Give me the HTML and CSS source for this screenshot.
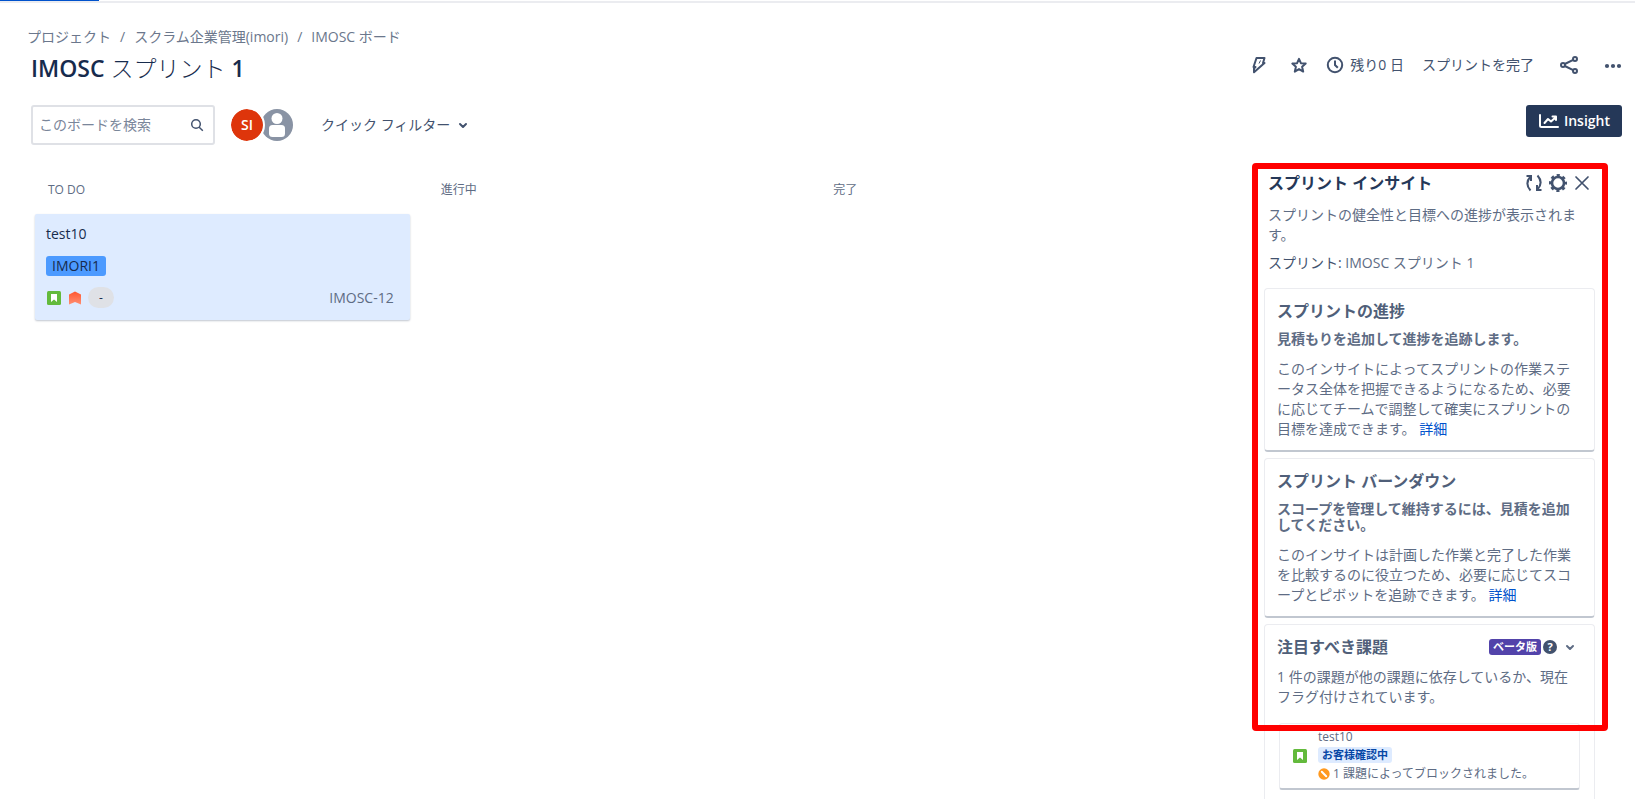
FILE: index.html
```html
<!DOCTYPE html>
<html lang="ja">
<head>
    <meta charset="UTF-8">
    <meta name="viewport" content="width=device-width, initial-scale=1.0">
    <title>IMOSC ボード</title>
    <link rel="stylesheet" href="styles.css">
</head>
<body>
    <div class="top-line"><div class="top-progress"></div></div>

    <!-- Header -->
    <header class="header">
        <div class="header-left">
            <nav class="breadcrumbs">
                <a href="#">プロジェクト</a>
                <span>/</span>
                <a href="#">スクラム企業管理(imori)</a>
                <span>/</span>
                <a href="#">IMOSC ボード</a>
            </nav>
            <h1><b>IMOSC</b> スプリント <b>1</b></h1>
        </div>
        <div class="header-actions">
            <button class="icon-btn" aria-label="自動化">
                <svg width="16" height="18" viewBox="0 0 16 18" fill="none" stroke="currentColor" stroke-width="2" stroke-linejoin="round"><path d="M5.500 2h8l-1.500 5h1.500L3 16.300V12.500l1.500-1.500H2.500z"/><path d="M9.500 4.500 8 7.500" stroke-width="1"/></svg>
            </button>
            <button class="icon-btn star" aria-label="お気に入り">
                <svg width="18" height="18" viewBox="0 0 18 18" fill="none" stroke="currentColor" stroke-width="2" stroke-linejoin="round"><path d="m9 2.800 1.900 4.400 4.800.4-3.600 3.200 1.100 4.800L9 13.100l-4.200 2.500 1.100-4.800-3.600-3.200 4.800-.4z"/></svg>
            </button>
            <div class="remaining">
                <svg width="18" height="18" viewBox="0 0 18 18" fill="none" stroke="currentColor" stroke-width="2"><circle cx="9" cy="9" r="7.200"/><path d="M9 4.500V9l2.800 2.800"/></svg>
                <span>残り0 日</span>
            </div>
            <button class="text-btn">スプリントを完了</button>
            <button class="icon-btn share" aria-label="共有">
                <svg width="20" height="20" viewBox="0 0 20 20" fill="none" stroke="currentColor" stroke-width="2"><circle cx="4" cy="10" r="2"/><circle cx="16" cy="4" r="2"/><circle cx="16" cy="16" r="2"/><path d="m5.800 9 8.400-4.200M5.800 11l8.400 4.200"/></svg>
            </button>
            <button class="icon-btn more" aria-label="その他">
                <svg width="18" height="18" viewBox="0 0 18 18" fill="currentColor"><circle cx="3" cy="10" r="2.100"/><circle cx="9" cy="10" r="2.100"/><circle cx="15" cy="10" r="2.100"/></svg>
            </button>
        </div>
    </header>

    <!-- Filters -->
    <div class="toolbar">
        <label class="search">
            <input type="text" placeholder="このボードを検索" aria-label="このボードを検索">
            <svg width="14" height="14" viewBox="0 0 14 14" fill="none" stroke="currentColor" stroke-width="1.500"><circle cx="6" cy="6" r="4.300"/><path d="m9.200 9.200 3.600 3.600"/></svg>
        </label>
        <div class="avatars">
            <span class="avatar avatar-si">SI</span>
            <span class="avatar avatar-none">
                <svg width="32" height="32" viewBox="0 0 32 32"><circle cx="16" cy="16" r="16" fill="#8993a4"/><circle cx="16" cy="9.500" r="5.500" fill="#fff"/><rect x="8" y="16" width="16" height="12" rx="3.500" fill="#fff"/></svg>
            </span>
        </div>
        <button class="text-btn quick-filter">クイック フィルター
            <svg width="10" height="8" viewBox="0 0 10 8" fill="none" stroke="currentColor" stroke-width="2" stroke-linecap="round" stroke-linejoin="round"><path d="m2 3 3 3 3-3"/></svg>
        </button>
        <button class="insight-btn">
            <svg width="20" height="14" viewBox="0 0 20 14" fill="none" stroke="currentColor" stroke-width="2" stroke-linecap="round" stroke-linejoin="round"><path d="M1 1v10.500q0 1.500 1.500 1.500H19"/><path d="m5.500 9 3.500-4 3 2.500L17 3M13.500 2.500H17V6"/></svg>
            Insight
        </button>
    </div>

    <!-- Board -->
    <main class="main">
        <div class="board">
            <section class="column">
                <h2>TO DO</h2>
                <article class="issue">
                    <div class="issue-title">test10</div>
                    <span class="epic">IMORI1</span>
                    <div class="issue-footer">
                        <svg width="14" height="14" viewBox="0 0 14 14"><rect width="14" height="14" rx="1.500" fill="#63ba3c"/><path d="M4 3h6v8L7 8.500 4 11z" fill="#fff"/></svg>
                        <svg class="priority" width="12" height="14" viewBox="0 0 12 14"><defs><linearGradient id="prio" x1="0" y1="0" x2="0" y2="1"><stop offset="0" stop-color="#ff5630"/><stop offset="1" stop-color="#ff8f73"/></linearGradient></defs><path d="M0 3.500 6 .5l6 3v10L6 11l-6 2.500z" fill="url(#prio)"/></svg>
                        <span class="estimate">-</span>
                        <span class="issue-key">IMOSC-12</span>
                    </div>
                </article>
            </section>
            <section class="column">
                <h2>進行中</h2>
            </section>
            <section class="column">
                <h2>完了</h2>
            </section>
        </div>

        <!-- Sprint insights -->
        <aside class="insights">
            <div class="highlight"></div>
            <div class="insights-head">
                <h2>スプリント インサイト</h2>
                <button class="icon-btn" aria-label="更新">
                    <svg width="18" height="18" viewBox="0 0 18 18" fill="none" stroke="currentColor" stroke-width="2"><path d="M5.500 16.500C1.500 12 1.500 7 5.500 2.500M1.500 2H6v5M12.500 1.500c4 4.500 4 9.500 0 14M16.500 16H12v-5"/></svg>
                </button>
                <button class="icon-btn" aria-label="設定">
                    <svg width="18" height="18" viewBox="0 0 18 18" fill="none" stroke="currentColor"><circle cx="9" cy="9" r="6" stroke-width="2.600"/><circle cx="9" cy="9" r="7.800" stroke-width="2.400" stroke-dasharray="3.200 2.926" stroke-dashoffset="1.600"/></svg>
                </button>
                <button class="icon-btn" aria-label="閉じる">
                    <svg width="18" height="18" viewBox="0 0 18 18" fill="none" stroke="currentColor" stroke-width="1.700" stroke-linecap="round"><path d="m3 3 12 12M15 3 3 15"/></svg>
                </button>
            </div>
            <p class="insights-text">スプリントの健全性と目標への進捗が表示されます。</p>
            <p class="insights-text"><span class="label">スプリント:</span> IMOSC スプリント 1</p>

            <div class="card">
                <h3>スプリントの進捗</h3>
                <h4>見積もりを追加して進捗を追跡します。</h4>
                <p>このインサイトによってスプリントの作業ステータス全体を把握できるようになるため、必要に応じてチームで調整して確実にスプリントの目標を達成できます。 <a href="#">詳細</a></p>
            </div>

            <div class="card">
                <h3>スプリント バーンダウン</h3>
                <h4>スコープを管理して維持するには、見積を追加してください。</h4>
                <p>このインサイトは計画した作業と完了した作業を比較するのに役立つため、必要に応じてスコープとピボットを追跡できます。 <a href="#">詳細</a></p>
            </div>

            <div class="card card-issues">
                <div class="card-head">
                    <h3>注目すべき課題</h3>
                    <span class="beta">ベータ版</span>
                    <span class="help">?</span>
                    <button class="icon-btn" aria-label="折りたたむ">
                        <svg width="10" height="8" viewBox="0 0 10 8" fill="none" stroke="currentColor" stroke-width="2" stroke-linecap="round" stroke-linejoin="round"><path d="m2 3 3 3 3-3"/></svg>
                    </button>
                </div>
                <p>1 件の課題が他の課題に依存しているか、現在フラグ付けされています。</p>
                <div class="blocked">
                    <svg width="14" height="14" viewBox="0 0 14 14"><rect width="14" height="14" rx="1.500" fill="#63ba3c"/><path d="M4 3h6v8L7 8.500 4 11z" fill="#fff"/></svg>
                    <div class="blocked-body">
                        <div>test10</div>
                        <span class="status">お客様確認中</span>
                        <div class="blocked-reason">
                            <svg width="12" height="12" viewBox="0 0 12 12"><circle cx="6" cy="6" r="5.700" fill="#ff991f"/><path d="m3.800 3.800 4.400 4.400" stroke="#fff" stroke-width="2" stroke-linecap="round"/></svg>
                            1 課題によってブロックされました。
                        </div>
                    </div>
                </div>
            </div>
        </aside>
    </main>
</body>
</html>
```
FILE: styles.css
```css
:root {
    --text-dark: #172b4d;
    --text: #42526e;
    --text-light: #5e6c84;
    --text-muted: #6b778c;
    --border: #dfe1e6;
    --link: #0052cc;
}

* {
    margin: 0;
    padding: 0;
    box-sizing: border-box;
}

body {
    height: 100vh;
    overflow: hidden;
    display: flex;
    flex-direction: column;
    background: #fff;
    color: var(--text);
    font-family: "Open Sans", "Noto Sans CJK JP", sans-serif;
    font-size: 14px;
    line-height: 20px;
    line-break: loose;
}

a {
    color: var(--link);
    text-decoration: none;
}

button {
    background: none;
    border: none;
    color: inherit;
    font: inherit;
    cursor: pointer;
}

svg {
    display: block;
    flex: none;
}

.top-line {
    flex: none;
    height: 3px;
    border-bottom: 2px solid #ebecf0;
}

.top-progress {
    width: 99px;
    height: 1px;
    background: var(--link);
}

/* Header */
.header {
    display: flex;
    justify-content: space-between;
    padding: 24px 13px 0 27px;
}

.breadcrumbs {
    display: flex;
    gap: 9px;
    color: var(--text-muted);
}

.breadcrumbs a {
    color: inherit;
}

h1 {
    margin: 7px 0 0 4px;
    color: var(--text-dark);
    font-size: 23px;
    font-weight: 300;
    line-height: 28px;
}

h1 b {
    font-weight: 600;
}

.header-actions {
    display: flex;
    align-items: center;
    height: 20px;
    margin-top: 28px;
}

.star {
    margin: 0 18px 0 23px;
}

.remaining {
    display: flex;
    align-items: center;
    gap: 6px;
    margin-right: 18px;
}

.share {
    margin: 0 25px 0 25px;
}

/* Filters */
.toolbar {
    display: flex;
    align-items: center;
    height: 40px;
    margin-top: 23px;
    padding: 0 13px 0 31px;
}

.search {
    display: flex;
    align-items: center;
    width: 184px;
    height: 40px;
    padding: 0 9px 0 6px;
    border: 2px solid var(--border);
    border-radius: 3px;
}

.search input {
    flex: 1;
    min-width: 0;
    border: none;
    outline: none;
    font: inherit;
}

.search input::placeholder {
    color: #7a869a;
}

.avatars {
    display: flex;
    margin: 0 26px 0 14px;
}

.avatar {
    width: 36px;
    height: 36px;
    border: 2px solid #fff;
    border-radius: 50%;
}

.avatar-si {
    z-index: 1;
    background: #de350b;
    background-clip: padding-box;
    color: #fff;
    font-weight: 600;
    line-height: 32px;
    text-align: center;
}

.avatar-none {
    margin-left: -6px;
}

.quick-filter {
    display: flex;
    align-items: center;
    gap: 8px;
}

.insight-btn {
    display: flex;
    align-items: center;
    gap: 5px;
    height: 32px;
    margin: 0 0 8px auto;
    padding: 0 12px 0 13px;
    border-radius: 3px;
    background: #253858;
    color: #fff;
    font-weight: 600;
}

/* Board */
.main {
    flex: 1;
    min-height: 0;
    display: flex;
    padding: 18px 27px 0 35px;
}

.board {
    flex: 1;
    display: grid;
    grid-template-columns: repeat(3, 1fr);
    gap: 18px;
    margin-right: 57px;
    align-items: start;
}

.column h2 {
    padding: 17px 13px 14px;
    color: var(--text-light);
    font-size: 12px;
    font-weight: 400;
}

.issue {
    padding: 10px 16px 12px 11px;
    border-radius: 2px;
    background: #deebff;
    box-shadow: 0 1px 2px rgba(9, 30, 66, 0.25);
}

.issue-title {
    color: var(--text-dark);
}

.epic {
    display: inline-block;
    margin: 12px 0 11px;
    padding: 0 6px;
    border-radius: 3px;
    background: #4c9aff;
    color: var(--text-dark);
    vertical-align: top;
}

.issue-footer {
    display: flex;
    align-items: center;
    padding-left: 1px;
}

.priority {
    margin: 0 7px 0 8px;
}

.estimate {
    width: 26px;
    border-radius: 11px;
    background: var(--border);
    color: var(--text-dark);
    font-size: 12px;
    line-height: 21px;
    text-align: center;
}

.issue-key {
    margin-left: auto;
    color: var(--text-light);
}

/* Sprint insights */
.insights {
    position: relative;
    width: 356px;
    padding: 10px 13px 0 12px;
}

.highlight {
    position: absolute;
    top: 0;
    left: 0;
    z-index: 2;
    width: 100%;
    height: 568px;
    border: 6px solid #f00;
    border-radius: 4px;
    pointer-events: none;
}

.insights-head {
    display: flex;
    align-items: center;
    gap: 6px;
    margin-bottom: 12px;
    padding: 0 4px;
}

.insights-head h2 {
    flex: 1;
    color: #253858;
    font-size: 16px;
    font-weight: 700;
}

.insights-text {
    margin-bottom: 8px;
    padding: 0 14px 0 4px;
    color: var(--text-light);
}

.label {
    color: var(--text);
}

.card {
    margin-top: 6px;
    padding: 12px 13px 11px 12px;
    border: 1px solid #ebecf0;
    border-bottom: 2px solid #c1c7d0;
    border-radius: 4px;
    color: var(--text-light);
}

.insights-text + .card {
    margin-top: 15px;
}

.card h3 {
    color: #505f79;
    font-size: 16px;
    font-weight: 700;
}

.card h4 {
    margin: 10px 0 12px;
    font-size: 14px;
    font-weight: 700;
    line-height: 16px;
}

.card-head {
    display: flex;
    align-items: center;
    margin-bottom: 10px;
}

.card-head h3 {
    flex: 1;
}

.beta {
    padding: 0 4px;
    border-radius: 3px;
    background: #5243aa;
    color: #fff;
    font-size: 11px;
    font-weight: 700;
    line-height: 16px;
}

.help {
    width: 14px;
    height: 14px;
    margin: 0 8px 0 2px;
    border-radius: 50%;
    background: var(--text);
    color: #fff;
    font-size: 11px;
    font-weight: 700;
    line-height: 14px;
    text-align: center;
}

.card-head .icon-btn {
    margin-right: 6px;
}

.blocked {
    display: flex;
    align-items: center;
    gap: 11px;
    margin: 16px 1px 0 2px;
    padding: 3px 13px 4px;
    border: 1px solid #ebecf0;
    border-bottom: 2px solid #c1c7d0;
    border-radius: 3px;
    font-size: 12px;
}

.status {
    display: block;
    width: max-content;
    margin-bottom: 1px;
    padding: 0 4px;
    border-radius: 3px;
    background: #deebff;
    color: #0747a6;
    font-size: 11px;
    font-weight: 700;
    line-height: 16px;
}

.blocked-reason {
    display: flex;
    align-items: center;
    gap: 3px;
}
```
